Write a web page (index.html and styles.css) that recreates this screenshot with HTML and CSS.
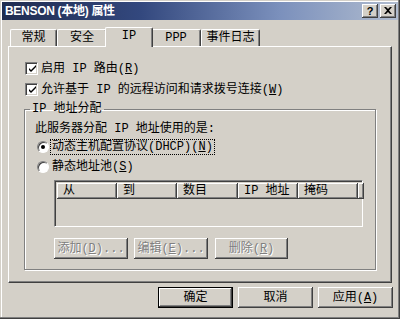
FILE: index.html
```html
<!DOCTYPE html>
<html lang="zh-CN">
<head>
<meta charset="utf-8">
<title>BENSON (本地) 属性</title>
<link rel="stylesheet" href="styles.css">
</head>
<body>
<div class="dialog">
  <div class="titlebar">
    <span class="title">BENSON (本地) 属性</span>
    <div class="tbtns">
      <span class="tbtn help">?</span>
      <span class="tbtn close"><svg width="8" height="7" viewBox="0 0 8 7"><path d="M0 0h2l2 2 2-2h2L5 3.5 8 7H6L4 5 2 7H0l3-3.5z" fill="#000"/></svg></span>
    </div>
  </div>

  <div class="tabs">
    <span class="tab w47">常规</span>
    <span class="tab w50">安全</span>
    <span class="tab active">IP</span>
    <span class="tab w50">PPP</span>
    <span class="tab w59">事件日志</span>
  </div>

  <div class="panel">
    <div class="check">
      <span class="cbox"><svg width="9" height="9" viewBox="0 0 9 9"><path d="M1 3v2l2 2 5-5V0L3 5z" fill="#000"/></svg></span>
      <span>启用 IP 路由(<u>R</u>)</span>
    </div>
    <div class="check">
      <span class="cbox"><svg width="9" height="9" viewBox="0 0 9 9"><path d="M1 3v2l2 2 5-5V0L3 5z" fill="#000"/></svg></span>
      <span>允许基于 IP 的远程访问和请求拨号连接(<u>W</u>)</span>
    </div>

    <fieldset class="group">
      <legend>IP 地址分配</legend>
      <div class="desc">此服务器分配 IP 地址使用的是:</div>
      <div class="radio"><span class="rbtn on"></span><span class="focus">动态主机配置协议(DHCP)(<u>N</u>)</span></div>
      <div class="radio"><span class="rbtn"></span><span class="rlabel">静态地址池(<u>S</u>)</span></div>
      <div class="list">
        <div class="lhead">
          <span class="col">从</span>
          <span class="col">到</span>
          <span class="col">数目</span>
          <span class="col">IP 地址</span>
          <span class="col">掩码</span>
          <span class="col"></span>
        </div>
      </div>
      <div class="btnrow">
        <span class="btn dis b74">添加(<u>D</u>)...</span>
        <span class="btn dis b74">编辑(<u>E</u>)...</span>
        <span class="btn dis b73">删除(<u>R</u>)</span>
      </div>
    </fieldset>
  </div>

  <div class="footer">
    <span class="btn def">确定</span>
    <span class="btn">取消</span>
    <span class="btn">应用(<u>A</u>)</span>
  </div>
</div>
</body>
</html>
```

FILE: styles.css
```css
* { box-sizing: border-box; }
html, body { margin: 0; padding: 0; }
body {
  background: #d4d0c8;
  font: 12px/14px "Liberation Mono", "Noto Sans CJK SC", monospace;
  color: #000;
}
u { text-decoration: underline; text-underline-offset: 1px; }

.dialog {
  width: 400px;
  height: 319px;
  background: #d4d0c8;
  padding: 2px 2px 2px 2px;
  box-shadow: inset -1px -1px 0 #404040, inset -2px -2px 0 #808080, inset 1px 1px 0 #d4d0c8, inset 2px 2px 0 #fff;
  display: flex;
  flex-direction: column;
}

.titlebar {
  height: 18px;
  background: linear-gradient(to right, #1f2c50 0%, #33487e 35%, #7b90bc 70%, #b0bccf 100%);
  display: flex;
  align-items: center;
  justify-content: space-between;
  padding: 0 2px 0 3px;
}
.title {
  color: #fff;
  font: bold 12px/14px "Liberation Sans", "Noto Sans CJK SC", sans-serif;
  letter-spacing: -0.3px;
}
.tbtns { display: flex; gap: 2px; }
.tbtn {
  width: 16px;
  height: 14px;
  background: #d4d0c8;
  box-shadow: inset -1px -1px 0 #404040, inset 1px 1px 0 #fff, inset -2px -2px 0 #808080;
  display: flex;
  align-items: center;
  justify-content: center;
  font: bold 11px/12px "Liberation Sans", sans-serif;
  padding-bottom: 1px;
}

.tabs {
  height: 19px;
  margin-top: 7px;
  padding-left: 8px;
  display: flex;
  align-items: flex-end;
}
.tab {
  height: 17px;
  display: flex;
  align-items: center;
  justify-content: center;
  border-top: 1px solid #fff;
  border-left: 1px solid #fff;
  border-right: 1px solid #404040;
  box-shadow: inset -1px 0 0 #808080;
  border-radius: 2px 2px 0 0;
  padding-bottom: 1px;
}
.w47 { width: 47px; }
.w50 { width: 50px; }
.w59 { width: 59px; }
.tab.active {
  width: 48px;
  height: 20px;
  margin: 0 -2px -1px;
  background: #d4d0c8;
  position: relative;
  z-index: 1;
  padding-bottom: 3px;
}

.panel {
  height: 237px;
  margin: 0 6px 0 6px;
  border-top: 1px solid #fff;
  border-left: 1px solid #fff;
  border-right: 1px solid #404040;
  border-bottom: 1px solid #404040;
  box-shadow: inset -1px -1px 0 #808080;
  padding: 15px 0 0 16px;
}

.check {
  display: flex;
  align-items: center;
  gap: 3px;
  height: 13px;
  margin-bottom: 8px;
}
.cbox {
  width: 13px;
  height: 13px;
  background: #fff;
  border-top: 1px solid #808080;
  border-left: 1px solid #808080;
  border-right: 1px solid #fff;
  border-bottom: 1px solid #fff;
  box-shadow: inset 1px 1px 0 #404040, inset -1px -1px 0 #d4d0c8;
  display: flex;
  align-items: center;
  justify-content: center;
  padding: 1px 0 0 1px;
}

.group {
  margin: -1px 0 0 -1px;
  width: 352px;
  height: 167px;
  padding: 0 0 0 10px;
  border: 1px solid #808080;
  box-shadow: inset 1px 1px 0 #fff, 1px 1px 0 #fff;
  min-width: 0;
}
.group legend {
  padding: 0 2px;
  margin-left: -5px;
  line-height: 13px;
}
.desc { margin-top: 6px; height: 14px; }
.radio {
  display: flex;
  align-items: center;
  height: 16px;
  margin-left: 2px;
  gap: 2px;
}
.desc + .radio { margin-top: 3px; }
.radio + .radio { margin-top: 4px; }
.rbtn {
  width: 12px;
  height: 12px;
  border-radius: 50%;
  background: #fff;
  border: 1px solid;
  border-color: #808080 #fff #fff #808080;
  box-shadow: inset 1px 1px 0 #404040;
  display: flex;
  align-items: center;
  justify-content: center;
}
.rbtn.on::after {
  content: "";
  width: 4px;
  height: 4px;
  border-radius: 50%;
  background: #000;
}
.focus {
  outline: 1px dotted #000;
  outline-offset: 0;
  padding: 0 1px;
  line-height: 14px;
}
.rlabel { padding: 0 1px; }

.list {
  margin: 5px 0 0 19px;
  width: 309px;
  height: 47px;
  border-top: 1px solid #808080;
  border-left: 1px solid #808080;
  border-right: 1px solid #fff;
  border-bottom: 1px solid #fff;
  box-shadow: inset 1px 1px 0 #404040, inset -1px -1px 0 #d4d0c8;
  padding: 2px 2px;
}
.lhead {
  display: grid;
  grid-template-columns: 60px 60px 61px 60px 60px 1fr;
  height: 16px;
}
.col {
  background: #d4d0c8;
  box-shadow: inset -1px -1px 0 #404040, inset 1px 1px 0 #fff, inset -2px -2px 0 #808080;
  padding: 1px 0 0 6px;
  line-height: 14px;
  white-space: nowrap;
}

.btnrow {
  display: flex;
  margin: 11px 0 0 19px;
  gap: 6px;
}
.btnrow .btn:last-child { margin-left: 1px; }
.btn {
  height: 21px;
  width: 75px;
  display: flex;
  align-items: center;
  justify-content: center;
  background: #d4d0c8;
  box-shadow: inset -1px -1px 0 #404040, inset 1px 1px 0 #fff, inset -2px -2px 0 #808080;
  white-space: nowrap;
}
.b74 { width: 74px; }
.b73 { width: 73px; }
.btn.dis {
  color: #808080;
  text-shadow: 1px 1px 0 #fff;
}
.btn.def {
  border: 1px solid #000;
}

.footer {
  display: flex;
  justify-content: flex-end;
  gap: 5px;
  margin-top: 4px;
  padding-right: 5px;
}
```
